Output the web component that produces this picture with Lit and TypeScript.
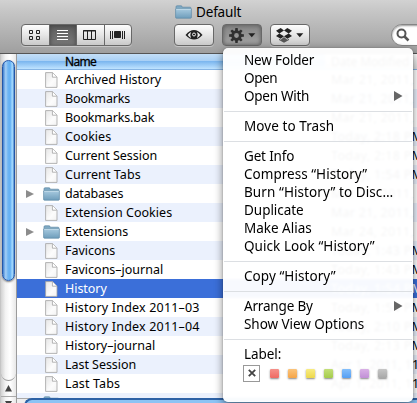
import { LitElement, html, css, svg } from "lit";
import { customElement } from "lit/decorators.js";
import { styleMap } from "lit/directives/style-map.js";

const FAMILY = '"Noto Sans", "Open Sans", sans-serif';
const pen = document.createElement("canvas").getContext("2d")!;

/* Tracking that brings `text`, set at `size` px, to just under `width` px. */
const fit = (text: string, size: number, width: number) => {
  pen.font = `${size}px ${FAMILY}`;
  const ls = (width - 0.8 - pen.measureText(text).width) / text.length;
  return styleMap({ letterSpacing: `${ls.toFixed(3)}px` });
};

type Row = { name: string; date: string; w: number; kind?: "folder"; selected?: boolean };

const ROWS: Row[] = [
  { name: "Archived History", date: "Mar 21, 2011, 1:05 PM", w: 97 },
  { name: "Bookmarks", date: "Mar 21, 2011, 1:05 PM", w: 66 },
  { name: "Bookmarks.bak", date: "Mar 21, 2011, 1:05 PM", w: 90 },
  { name: "Cookies", date: "Today, 2:18 PM", w: 47 },
  { name: "Current Session", date: "Today, 2:18 PM", w: 93 },
  { name: "Current Tabs", date: "Today, 1:54 PM", w: 76.5 },
  { name: "databases", date: "Mar 21, 2011, 1:05 PM", w: 59, kind: "folder" },
  { name: "Extension Cookies", date: "Mar 21, 2011, 1:05 PM", w: 108 },
  { name: "Extensions", date: "Mar 24, 2011, 1:05 PM", w: 64, kind: "folder" },
  { name: "Favicons", date: "Today, 1:43 PM", w: 51 },
  { name: "Favicons–journal", date: "Today, 1:43 PM", w: 99 },
  { name: "History", date: "Today, 1:54 PM", w: 42.5, selected: true },
  { name: "History Index 2011–03", date: "Today, 1:54 PM", w: 135.5 },
  { name: "History Index 2011–04", date: "Today, 2:10 PM", w: 135.5 },
  { name: "History–journal", date: "Today, 2:13 PM", w: 91 },
  { name: "Last Session", date: "Apr 1, 2011, 11:20 AM", w: 72 },
  { name: "Last Tabs", date: "Apr 1, 2011, 11:20 AM", w: 56 },
  { name: "", date: "", w: 0, kind: "folder" },
];

const fitDate = (d: string) =>
  d.startsWith("Today") ? fit(d, 12.5, 93) : d.startsWith("Apr") ? fit("Apr 1, 2011, 11", 12.5, 89) : fit("Mar 21, 2011", 12.5, 80);

type Item = { text: string; w: number; sub?: boolean };
const MENU: Item[][] = [
  [{ text: "New Folder", w: 71 }, { text: "Open", w: 34 }, { text: "Open With", w: 66, sub: true }],
  [{ text: "Move to Trash", w: 91 }],
  [
    { text: "Get Info", w: 51 },
    { text: "Compress “History”", w: 124 },
    { text: "Burn “History” to Disc…", w: 150 },
    { text: "Duplicate", w: 60.5 },
    { text: "Make Alias", w: 68.5 },
    { text: "Quick Look “History”", w: 131.5 },
  ],
  [{ text: "Copy “History”", w: 92.5 }],
  [{ text: "Arrange By", w: 69.5, sub: true }, { text: "Show View Options", w: 121 }],
];

const LABELS = ["red", "orange", "yellow", "green", "blue", "purple", "gray"];

const folder = html`<svg class="folder" width="17" height="14" viewBox="0 0 17 14">
  <defs><linearGradient id="f" x1="0" y1="0" x2="0" y2="1"><stop offset="0" stop-color="#a9cbe0" /><stop offset="1" stop-color="#6e9dbb" /></linearGradient></defs>
  <path d="M1 3.5V1.8Q1 .8 2 .8H6.2Q7 .8 7.2 2.2H15Q16 2.2 16 3.2V5H1Z" fill="#7fa9c4" stroke="#5f8aa6" stroke-width=".7" />
  <rect x=".6" y="3.6" width="15.8" height="9.6" rx=".8" fill="url(#f)" stroke="#5f8aa6" stroke-width=".7" />
  <path d="M1.2 4.3H15.8" stroke="#cde3f0" stroke-width=".8" />
</svg>`;

const file = html`<svg class="file" width="13" height="16" viewBox="0 0 13 16">
  <defs><linearGradient id="p" x1="0" y1="0" x2="1" y2="1"><stop offset="0" stop-color="#e6e6e6" /><stop offset=".6" stop-color="#fcfcfc" /><stop offset="1" stop-color="#f2f2f2" /></linearGradient></defs>
  <path d="M.6 .6H7.6L12 5V15.4H.6Z" fill="url(#p)" stroke="#a2a2a2" stroke-width=".8" />
  <path d="M7.4 .8V5.2H11.8" fill="#fff" stroke="#a2a2a2" stroke-width=".8" />
</svg>`;

const gear = html`<svg width="15" height="15" viewBox="-7.5 -7.5 15 15">
  ${[0, 45, 90, 135, 180, 225, 270, 315].map(
    (a) => svg`<path d="M-1.5 -4L-1.2 -7.4H1.2L1.5 -4Z" fill="#303030" transform="rotate(${a})" />`
  )}
  <circle r="3.8" fill="none" stroke="#303030" stroke-width="2.8" />
</svg>`;

@customElement("app-root")
export class AppRoot extends LitElement {
  static styles = css`
    :host {
      display: block;
      position: relative;
      width: 417px;
      height: 403px;
      overflow: hidden;
      background: #fff;
      color: #000;
      font: 12.5px/19px "Noto Sans", "Open Sans", sans-serif;
      white-space: nowrap;
    }
    svg { display: block; flex: none; }
    .chrome {
      box-sizing: border-box;
      height: 54px;
      border-bottom: 1px solid #555;
      background: linear-gradient(#d2d2d2, #c5c5c5 12px, #9f9f9f);
    }
    .title {
      display: flex;
      align-items: center;
      gap: 4px;
      height: 24px;
      padding-left: 175px;
      font-size: 13.5px;
    }
    .title svg { margin-top: -1px; }
    .tools { display: flex; height: 22px; padding-left: 21px; }
    .tools > * { flex: none; }
    .btn {
      box-sizing: border-box;
      display: flex;
      align-items: center;
      justify-content: center;
      gap: 4px;
      height: 22px;
      border: 1px solid #686868;
      border-radius: 4px;
      background: linear-gradient(#fdfdfd, #e6e6e6 50%, #c9c9c9);
      box-shadow: 0 1px 0 #c6c6c6;
    }
    .views { width: 111px; overflow: hidden; gap: 0; }
    .seg {
      display: flex;
      flex: 1;
      height: 20px;
      align-items: center;
      justify-content: center;
    }
    .seg + .seg { border-left: 1px solid #686868; }
    .on { background: linear-gradient(#5c5c5c, #787878); box-shadow: inset 0 1px 4px #444; }
    .eye { width: 40px; margin-left: 42px; }
    .act { width: 40px; margin-left: 8px; }
    .pressed { background: linear-gradient(#858585, #a2a2a2); box-shadow: inset 0 0 4px #555; }
    .search {
      box-sizing: border-box;
      display: flex;
      align-items: center;
      width: 60px;
      height: 22px;
      margin-left: 81px;
      padding-left: 4px;
      border: 1px solid #858585;
      border-radius: 11px;
      background: #fff;
      box-shadow: inset 0 1px 2px #999;
    }
    .body { display: flex; height: 349px; }
    .vbar {
      box-sizing: border-box;
      display: flex;
      flex-direction: column;
      flex: none;
      width: 17px;
      border-left: 1px solid #c5c5c5;
      border-right: 1px solid #9b9b9b;
      background: linear-gradient(90deg, #d2d2d2, #f3f3f3 30%, #fff 60%, #e8e8e8);
    }
    .track { flex: none; height: 327px; padding: 6px 0 0 1px; box-sizing: border-box; border-radius: 0 0 8px 8px; border-bottom: 1.5px solid #999; }
    .thumb {
      box-sizing: border-box;
      width: 13px;
      height: 221px;
      border: 1px solid #2456a8;
      border-radius: 7px;
      background: linear-gradient(90deg, #3f7fd0, #a5d0f7 25%, #6fb4f2 45%, #62b0f5 65%, #a8dcff 85%, #4b88cc);
      box-shadow: 0 1px 2px #777;
    }
    .arrow { flex: none; display: flex; align-items: center; justify-content: center; height: 15px; border-bottom: 1px solid #aaa; }
    .list { flex: 1; min-width: 0; overflow: hidden; display: flex; flex-direction: column; }
    .head {
      box-sizing: border-box;
      display: flex;
      flex: none;
      height: 16px;
      line-height: 15px;
      font-size: 12px;
      border-bottom: 1px solid #87b5e4;
      background: linear-gradient(#c3def7, #a9d0f5 45%, #7db7ef 50%, #bfe3ff);
    }
    .head span { display: block; }
    .hn { box-sizing: border-box; flex: none; width: 308px; padding-left: 48px; -webkit-text-stroke: 0.3px #000; }
    .hd { flex: 1; padding-left: 6px; background: linear-gradient(#fff, #dcdcdc); }
    .rows { flex: none; height: 328px; overflow: hidden; }
    .row { display: flex; height: 19px; align-items: center; }
    .row > * { flex: none; }
    .row:nth-child(even) { background: #ebf1fd; }
    .row.sel { background: #3b6fd9; color: #fff; }
    .tri { width: 26px; padding-left: 9px; box-sizing: border-box; }
    .ic { width: 22px; display: flex; }
    .file { margin-left: 2px; }
    .name { width: 266px; }
    .hbar {
      box-sizing: border-box;
      height: 5px;
      padding-left: 7px;
      background: #eee;
      border-top: 1px solid #aaa;
    }
    .hthumb { height: 12px; border: 2px solid #2d62a6; border-right: 0; border-radius: 8px 0 0 0; background: #8cc3f4; margin-top: -1px; }
    .menu {
      position: absolute;
      left: 223px;
      top: 48px;
      box-sizing: border-box;
      width: 190px;
      height: 354px;
      padding-top: 3px;
      border-radius: 5px;
      background: rgba(255, 255, 255, 0.96);
      backdrop-filter: blur(0.8px);
      box-shadow: 0 3px 9px rgba(0, 0, 0, 0.5), 0 0 1px rgba(0, 0, 0, 0.5);
      font-size: 13.5px;
      line-height: 18px;
    }
    .item { display: flex; height: 18px; padding: 0 10px 0 21px; align-items: center; justify-content: space-between; }
    .sep { height: 1px; margin: 6px 1px 5px; background: #dcdfe3; }
    .label { padding-left: 21px; margin-top: 2px; height: 18px; }
    .swatches { display: flex; align-items: center; height: 20px; padding-left: 20px; }
    .none {
      box-sizing: border-box;
      display: flex;
      align-items: center;
      justify-content: center;
      width: 17px;
      height: 17px;
      margin-right: 10px;
      border: 1px solid #999;
    }
    .sw { width: 9px; height: 9px; margin-right: 9px; border-radius: 1px; box-shadow: 0 1px 2px #888; }
    .red { background: linear-gradient(#f5918a, #ef6a62); }
    .orange { background: linear-gradient(#fbc47c, #f5a548); }
    .yellow { background: linear-gradient(#f8ec84, #edd84c); }
    .green { background: linear-gradient(#c3df78, #a5cc4c); }
    .blue { background: linear-gradient(#84bffb, #559ff3); }
    .purple { background: linear-gradient(#d9b0e6, #c18fd6); }
    .gray { background: linear-gradient(#c6c6c6, #a8a8a8); }
  `;

  render() {
    const caret = html`<svg width="8" height="5"><path d="M.3 .3H7.3L3.8 4.3Z" fill="#222" /></svg>`;
    return html`
      <div class="chrome">
        <div class="title">${folder}<span style=${fit("Default", 13.5, 46)}>Default</span></div>
        <div class="tools">
          <div class="btn views">
            <div class="seg"><svg width="12" height="11" fill="none" stroke="#222"><path d="M.5 .5h3v3h-3zM7.5 .5h3v3h-3zM.5 6.5h3v3h-3zM7.5 6.5h3v3h-3z" /></svg></div>
            <div class="seg on"><svg width="11" height="11" stroke="#fff"><path d="M0 .5H11M0 3.5H11M0 6.5H11M0 9.5H11" /></svg></div>
            <div class="seg"><svg width="14" height="11" fill="none" stroke="#222"><path d="M.5 .5H12.5V9.5H.5ZM4.5 .5V9.5M8.5 .5V9.5M0 1H13" /></svg></div>
            <div class="seg"><svg width="16" height="10" stroke="#222"><path d="M.5 1V9M2.5 1V9M12.5 1V9M14.5 1V9" /><path d="M4.5 1.5H10.5V7.5H4.5Z" fill="#222" /></svg></div>
          </div>
          <div class="btn eye"><svg width="18" height="12" viewBox="0 0 18 12"><path d="M.5 6Q9 -4 17.5 6Q9 15 .5 6Z" fill="#222" /><path d="M2.7 6Q4 4 6 3Q4.5 6 6 9Q4 8 2.7 6ZM15.3 6Q14 4 12 3Q13.5 6 12 9Q14 8 15.3 6Z" fill="#eee" /><circle cx="9" cy="5.5" r="1.5" fill="none" stroke="#eee" stroke-width="1" /></svg></div>
          <div class="btn act pressed">${gear}${caret}</div>
          <div class="btn act"><svg width="16" height="15" viewBox="0 0 16 15"><path d="M4.7 0L8 2.6L3.3 5.4L0 2.8ZM11.3 0L16 2.8L12.7 5.4L8 2.6ZM3.3 5.4L8 8.2L4.7 10.8L0 8ZM12.7 5.4L16 8L11.3 10.8L8 8.2Z" fill="#222" /><path d="M8 9L11.3 11.7L13 10.7V11.9L8 14.8L3 11.9V10.7L4.7 11.7Z" fill="#555" /></svg>${caret}</div>
          <div class="search"><svg width="14" height="14" fill="none" stroke="#555"><circle cx="5.5" cy="5.5" r="4" stroke-width="2" /><path d="M8.5 8.5L12.5 12.5" stroke-width="2.5" /></svg></div>
        </div>
      </div>
      <div class="body">
        <div class="vbar">
          <div class="track"><div class="thumb"></div></div>
          <div class="arrow"><svg width="7" height="7"><path d="M3.5 0L7 6.5H0Z" fill="#444" /></svg></div>
          <div class="arrow"><svg width="7" height="7"><path d="M3.5 6.5L7 0H0Z" fill="#444" /></svg></div>
        </div>
        <div class="list">
          <div class="head">
            <div class="hn"><span style=${fit("Name", 12, 32)}>Name</span></div>
            <div class="hd"><span style=${fit("Date Modified", 12, 79)}>Date Modified</span></div>
          </div>
          <div class="rows">
            ${ROWS.map(
              (r) => html`<div class="row ${r.selected ? "sel" : ""}">
                <div class="tri">${r.kind && r.name ? html`<svg width="8" height="8"><path d="M0 0L8 4L0 8Z" fill="#8c8c8c" /></svg>` : ""}</div>
                <div class="ic">${r.kind ? folder : file}</div>
                ${r.name
                  ? html`<div class="name"><span style=${fit(r.name, 12.5, r.w)}>${r.name}</span></div>
                      <div class="date" style=${fitDate(r.date)}>${r.date}</div>`
                  : ""}
              </div>`
            )}
          </div>
          <div class="hbar"><div class="hthumb"></div></div>
        </div>
      </div>
      <div class="menu">
        ${MENU.map(
          (g) => html`${g.map(
              (i) => html`<div class="item"><span style=${fit(i.text, 13.5, i.w)}>${i.text}</span>${i.sub ? html`<svg width="9" height="10"><path d="M0 0L8.5 5L0 10Z" fill="#666" /></svg>` : ""}</div>`
            )}<div class="sep"></div>`
        )}
        <div class="label"><span style=${fit("Label:", 13.5, 38)}>Label:</span></div>
        <div class="swatches">
          <div class="none"><svg width="8" height="8" stroke="#444" stroke-width="1.8"><path d="M.8 .8L7.2 7.2M7.2 .8L.8 7.2" /></svg></div>
          ${LABELS.map((l) => html`<div class="sw ${l}"></div>`)}
        </div>
      </div>
    `;
  }
}
